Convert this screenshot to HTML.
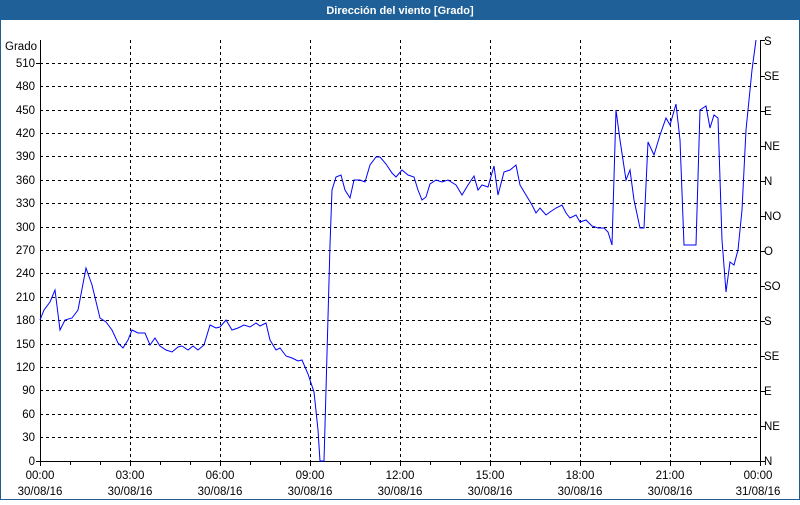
<!DOCTYPE html>
<html><head><style>
body{margin:0;width:800px;height:500px;overflow:hidden;background:#fff;font-family:"Liberation Sans",sans-serif}
</style></head><body>
<svg width="800" height="500" xmlns="http://www.w3.org/2000/svg" font-family="Liberation Sans, sans-serif" font-size="11.5">
<rect x="0.5" y="0.5" width="799" height="499" fill="#fff" stroke="#1f5f97"/>
<rect x="0" y="0" width="800" height="20" fill="#1f6098"/>
<text x="400" y="14" fill="#fff" font-weight="bold" text-anchor="middle" font-size="11">Dirección del viento [Grado]</text>
<g stroke="#000" stroke-dasharray="3,3" stroke-width="1" fill="none">
<path d="M40 63.5H760M40 86.5H760M40 110.5H760M40 133.5H760M40 156.5H760M40 180.5H760M40 203.5H760M40 227.5H760M40 250.5H760M40 273.5H760M40 297.5H760M40 320.5H760M40 344.5H760M40 367.5H760M40 390.5H760M40 414.5H760M40 437.5H760"/>
<path d="M130.5 40V461M220.5 40V461M310.5 40V461M400.5 40V461M490.5 40V461M580.5 40V461M670.5 40V461"/>
</g>
<g stroke="#000" fill="none">
<path d="M40.5 40V461.5H760.5V40"/>
<path d="M70.5 461V465M100.5 461V465M160.5 461V465M190.5 461V465M250.5 461V465M280.5 461V465M340.5 461V465M370.5 461V465M430.5 461V465M460.5 461V465M520.5 461V465M550.5 461V465M610.5 461V465M640.5 461V465M700.5 461V465M730.5 461V465M40.5 461V466M130.5 461V466M220.5 461V466M310.5 461V466M400.5 461V466M490.5 461V466M580.5 461V466M670.5 461V466M760.5 461V466"/>
<path d="M36 461.5H40M36 63.5H40M760 40.5H765M760 76.5H765M760 111.5H765M760 146.5H765M760 181.5H765M760 216.5H765M760 251.5H765M760 286.5H765M760 321.5H765M760 356.5H765M760 391.5H765M760 426.5H765M760 461.5H765"/>
</g>
<g text-anchor="end" fill="#000">
<text x="37" y="50">Grado</text>
<text x="35" y="67">510</text><text x="35" y="90">480</text><text x="35" y="114">450</text><text x="35" y="137">420</text><text x="35" y="160">390</text><text x="35" y="184">360</text><text x="35" y="207">330</text><text x="35" y="231">300</text><text x="35" y="254">270</text><text x="35" y="277">240</text><text x="35" y="301">210</text><text x="35" y="324">180</text><text x="35" y="348">150</text><text x="35" y="371">120</text><text x="35" y="394">90</text><text x="35" y="418">60</text><text x="35" y="441">30</text><text x="35" y="465">0</text>
</g>
<g fill="#000">
<text x="764" y="45">S</text><text x="764" y="80">SE</text><text x="764" y="115">E</text><text x="764" y="150">NE</text><text x="764" y="185">N</text><text x="764" y="220">NO</text><text x="764" y="255">O</text><text x="764" y="290">SO</text><text x="764" y="325">S</text><text x="764" y="360">SE</text><text x="764" y="395">E</text><text x="764" y="430">NE</text><text x="764" y="465">N</text>
</g>
<g text-anchor="middle" fill="#000">
<text x="40" y="479">00:00</text><text x="40" y="495">30/08/16</text>
<text x="130" y="479">03:00</text><text x="130" y="495">30/08/16</text>
<text x="220" y="479">06:00</text><text x="220" y="495">30/08/16</text>
<text x="310" y="479">09:00</text><text x="310" y="495">30/08/16</text>
<text x="400" y="479">12:00</text><text x="400" y="495">30/08/16</text>
<text x="490" y="479">15:00</text><text x="490" y="495">30/08/16</text>
<text x="580" y="479">18:00</text><text x="580" y="495">30/08/16</text>
<text x="670" y="479">21:00</text><text x="670" y="495">30/08/16</text>
<text x="758" y="479">00:00</text><text x="758" y="495">31/08/16</text>
</g>
<polyline fill="none" stroke="#0000ff" stroke-width="1" points="40,320 44,310 50,302 55,290 60,330 65,320 72,318 78,310 86,268 92,285 100,318 106,322 112,330 118,343 123,348 128,340 132,330 138,333 145,333 150,345 155,338 160,346 166,350 172,352 178,347 182,346 188,350 193,346 198,350 204,345 210,325 216,328 220,327 226,320 232,330 238,328 244,325 250,327 256,323 260,326 266,323 270,340 276,350 280,348 286,356 292,358 298,361 302,360 308,374 314,392 318,430 320,461 324,461 326,390 330,245 332,190 336,177 341,175 345,190 350,198 354,180 360,180 365,182 370,165 376,157 380,157 386,164 392,173 396,177 402,170 408,175 414,177 418,190 422,200 426,197 430,184 436,180 442,182 448,180 456,185 462,195 468,185 474,176 478,190 482,185 488,187 494,166 498,195 504,172 510,170 516,165 520,185 526,195 532,205 536,213 540,208 546,215 550,212 556,208 562,205 566,213 570,218 576,215 580,222 586,220 592,226 598,228 604,228 608,232 612,245 616,110 620,140 626,180 630,170 634,200 640,228 644,228 648,142 654,155 660,135 666,118 670,125 676,104 680,140 684,245 696,245 700,110 706,106 710,128 714,115 718,118 722,240 726,292 730,262 734,265 738,250 742,210 746,130 752,70 756,40"/>
</svg>
</body></html>
